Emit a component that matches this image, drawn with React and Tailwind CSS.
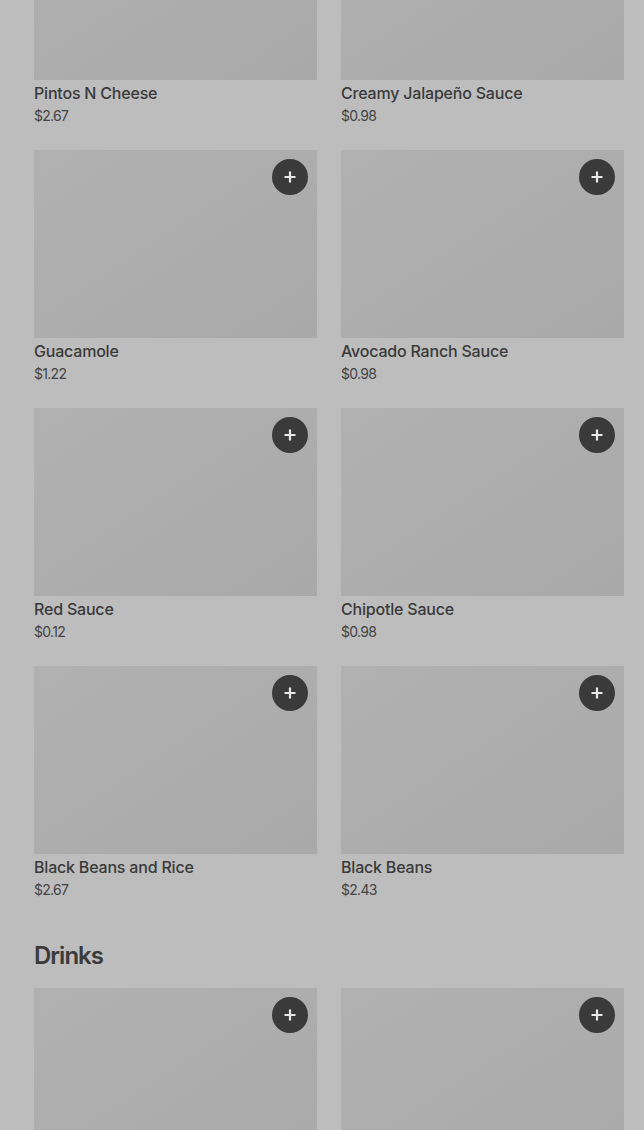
import React from "react";

const rows = [
  [["Pintos N Cheese", "$2.67"], ["Creamy Jalapeño Sauce", "$0.98"]],
  [["Guacamole", "$1.22"], ["Avocado Ranch Sauce", "$0.98"]],
  [["Red Sauce", "$0.12"], ["Chipotle Sauce", "$0.98"]],
  [["Black Beans and Rice", "$2.67"], ["Black Beans", "$2.43"]],
];

function Plus() {
  return (
    <div className="absolute right-[9px] top-[9px] flex h-9 w-9 items-center justify-center rounded-full bg-[#3a3a3a]">
      <svg width="14" height="14" viewBox="0 0 14 14">
        <path d="M7 1.5v11M1.5 7h11" stroke="#e8e8e8" strokeWidth="2.2" strokeLinecap="butt" />
      </svg>
    </div>
  );
}

function Thumb({ showPlus = true }) {
  return (
    <div className="relative h-[188px] bg-gradient-to-br from-[#b1b1b1] to-[#a9a9a9]">
      {showPlus && <Plus />}
    </div>
  );
}

function Card({ name, price, showPlus = true }) {
  return (
    <div className="flex flex-col gap-[3px]">
      <Thumb showPlus={showPlus} />
      <div className="text-base font-medium leading-5 tracking-[-0.2px] text-[#3a3a3a]">{name}</div>
      <div className="text-sm leading-5 tracking-[-0.7px] text-[#444444]">{price}</div>
    </div>
  );
}

export default function App() {
  return (
    <div
      className="flex h-[1130px] flex-col overflow-hidden bg-[#bdbdbd] pl-[34px] pr-[20px]"
      style={{ fontFamily: "Inter, 'Noto Sans', sans-serif" }}
    >
      <div className="-mt-[108px] grid grid-cols-2 gap-x-6 gap-y-6">
        {rows.map((r, i) =>
          r.map(([n, p], j) => <Card key={i + "-" + j} name={n} price={p} showPlus={i !== 0} />)
        )}
      </div>
      <h2 className="mt-10 mb-4 text-2xl font-semibold leading-8 tracking-[-1px] text-[#3a3a3a]">Drinks</h2>
      <div className="grid grid-cols-2 gap-x-6">
        <Thumb />
        <Thumb />
      </div>
    </div>
  );
}
